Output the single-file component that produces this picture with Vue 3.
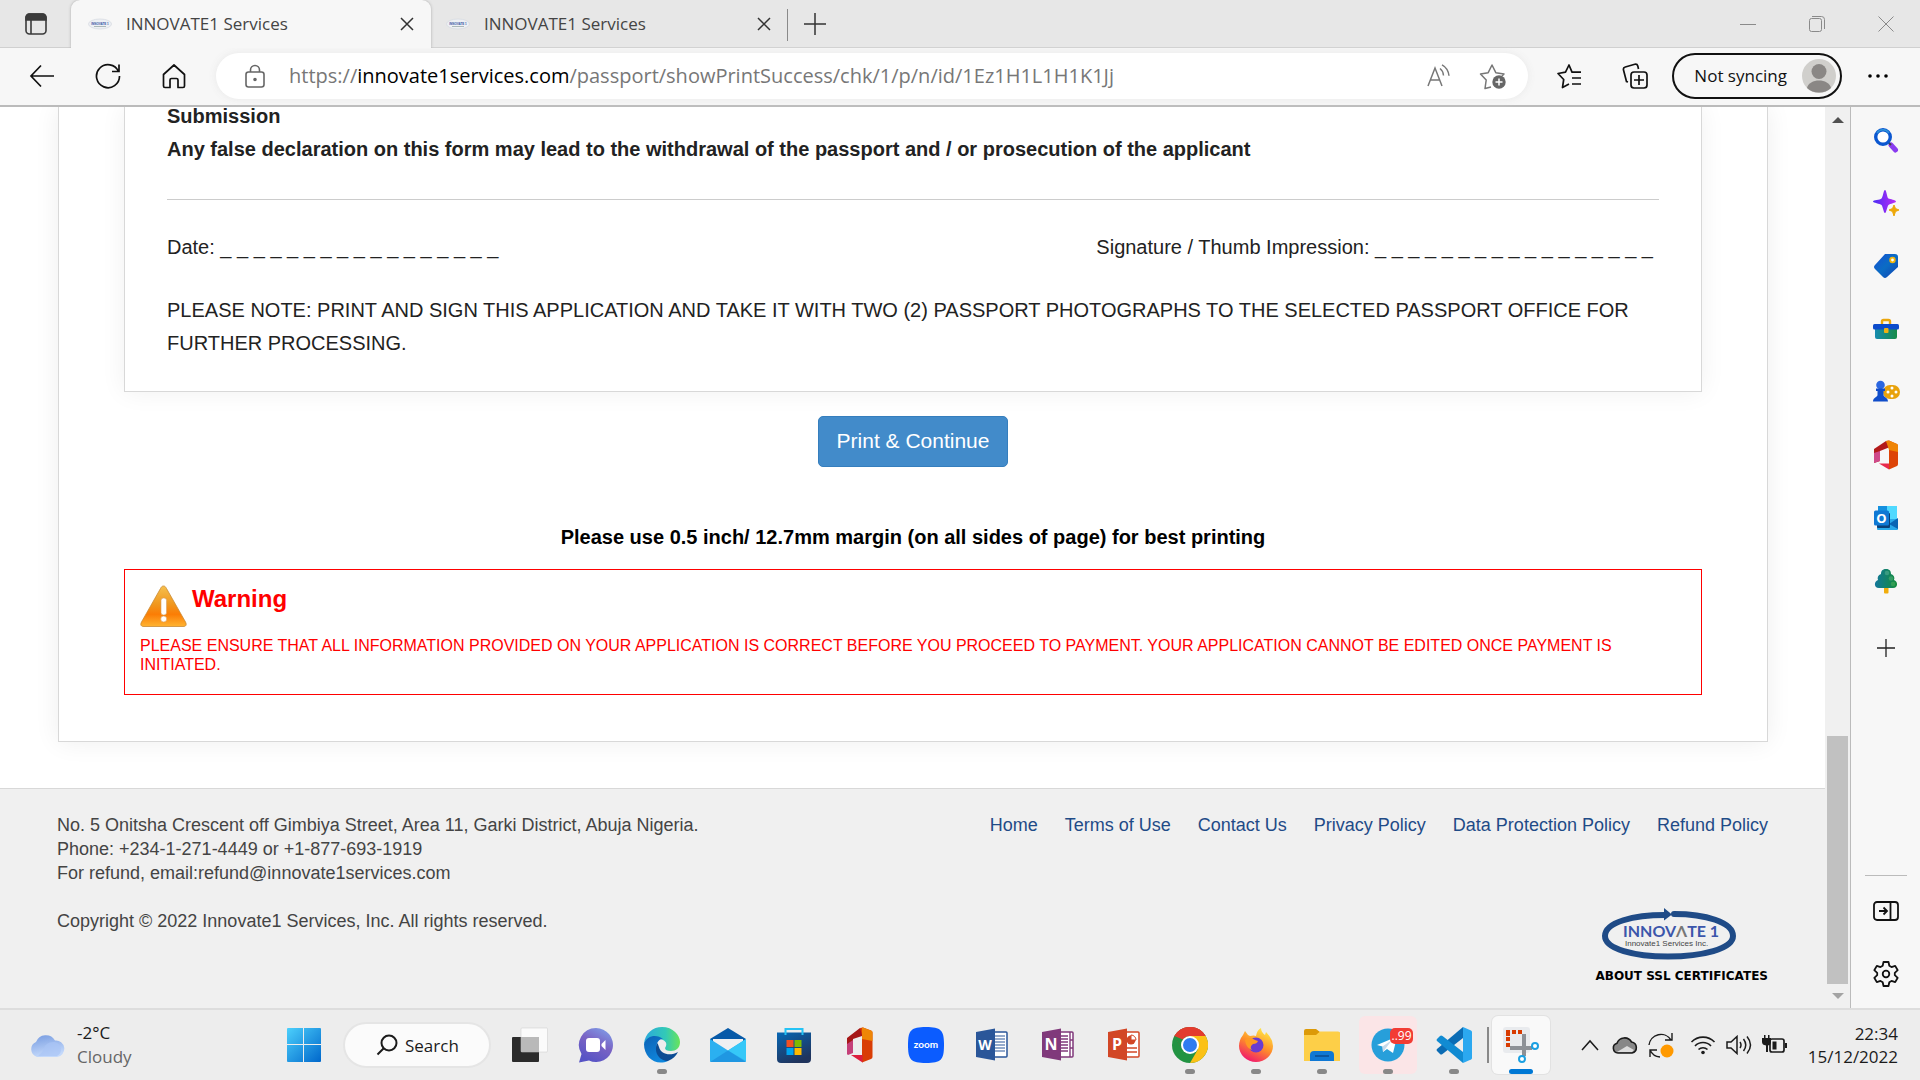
<script setup>
const tabs = [
  { title: 'INNOVATE1 Services', active: true },
  { title: 'INNOVATE1 Services', active: false },
]
const blank = '_ _ _ _ _ _ _ _ _ _ _ _ _ _ _ _ _'
const links = ['Home', 'Terms of Use', 'Contact Us', 'Privacy Policy', 'Data Protection Policy', 'Refund Policy']
</script>

<template>
  <div class="desktop">
    <header>
      <div class="tabstrip">
        <button class="plain tab-actions" aria-label="Tab actions">
          <svg width="22" height="22" viewBox="0 0 22 22" fill="none" stroke="#3b3b3b" stroke-width="1.6"><rect x="1" y="1" width="20" height="20" rx="3.5" /><path d="M1 4.5A3.5 3.5 0 0 1 4.500 1h13A3.500 3.500 0 0 1 21 4.500V7H1z" fill="#3b3b3b" /><path d="M6 7v14" /></svg>
        </button>
        <div v-for="(tab, i) in tabs" :key="i" class="tab" :class="{ active: tab.active }">
          <svg class="favicon" width="24" height="12" viewBox="0 0 24 12"><ellipse cx="12" cy="6" rx="11.500" ry="5" fill="#eef0f4" stroke="#d4d8e0" stroke-width=".7" /><text x="12" y="7" text-anchor="middle" font-family="Liberation Sans, sans-serif" font-weight="bold" font-size="3" fill="#3454a4">INNOVATE 1</text><path d="M6 8.500h12" stroke="#9aa" stroke-width=".8" /></svg>
          <span class="tab-title">{{ tab.title }}</span>
          <button class="plain" aria-label="Close tab"><svg width="14" height="14" viewBox="0 0 14 14" stroke="#333" stroke-width="1.500"><path d="M1 1l12 12M13 1L1 13" /></svg></button>
        </div>
        <button class="plain new-tab" aria-label="New tab"><svg width="22" height="22" viewBox="0 0 22 22" stroke="#333" stroke-width="1.500"><path d="M11 0v22M0 11h22" /></svg></button>
        <div class="window-controls">
          <button class="plain" aria-label="Minimize"><svg width="16" height="16" viewBox="0 0 16 16" stroke="#8a8a8a"><path d="M0 8.500h16" /></svg></button>
          <button class="plain" aria-label="Restore"><svg width="16" height="16" viewBox="0 0 16 16" fill="none" stroke="#8a8a8a"><rect x=".5" y="2.500" width="12" height="13" rx="2" /><path d="M3 .5h9.500a3 3 0 0 1 3 3V13" /></svg></button>
          <button class="plain" aria-label="Close window"><svg width="16" height="16" viewBox="0 0 16 16" stroke="#8a8a8a"><path d="M.5.5l15 15M15.500.5l-15 15" /></svg></button>
        </div>
      </div>

      <div class="toolbar">
        <div class="nav">
          <button class="plain" aria-label="Back"><svg width="26" height="26" viewBox="0 0 26 26" fill="none" stroke="#111" stroke-width="1.700"><path d="M25 13H2M12 2.500L2 13l10 10.500" /></svg></button>
          <button class="plain" aria-label="Refresh"><svg width="26" height="26" viewBox="0 0 26 26" fill="none" stroke="#111" stroke-width="1.700"><path d="M23.500 8.500A11.500 11.500 0 1 0 24.500 13M24 1.500v7h-7" /></svg></button>
          <button class="plain" aria-label="Home"><svg width="26" height="26" viewBox="0 0 26 26" fill="none" stroke="#111" stroke-width="1.700" stroke-linejoin="round"><path d="M2.500 11.500L13 2l10.500 9.500V23a1.500 1.500 0 0 1-1.500 1.500h-5V17a1.500 1.500 0 0 0-1.500-1.500h-5A1.500 1.500 0 0 0 9 17v7.500H4A1.500 1.500 0 0 1 2.500 23z" /></svg></button>
        </div>
        <div class="address">
          <svg width="20" height="24" viewBox="0 0 20 24" fill="none" stroke="#666" stroke-width="1.600"><rect x="1" y="8" width="18" height="15" rx="2.500" /><path d="M5.500 8V6a4.500 4.500 0 0 1 9 0v2" /><circle cx="10" cy="15.500" r="1" fill="#666" /></svg>
          <div class="url" contenteditable="true" role="textbox" aria-label="Address and search bar" spellcheck="false">https://<span class="domain">innovate1services.com</span>/passport/showPrintSuccess/chk/1/p/n/id/1Ez1H1L1H1K1Jj</div>
          <button class="plain" aria-label="Read aloud"><svg width="24" height="24" viewBox="0 0 24 24" fill="none" stroke="#777" stroke-width="1.500"><path d="M1 22L8 4l7 18M3.500 16h9M13 4.500c2 1.500 3.300 4 3.500 7M15 .8c4 2.200 6.500 6 7 11" /></svg></button>
          <button class="plain" aria-label="Add to favorites"><svg width="28" height="28" viewBox="0 0 28 28" fill="none" stroke="#777" stroke-width="1.500" stroke-linejoin="round"><path d="M12 25l-6 1.500 1.200-8.500L1.500 12l7.700-1.300L13 3l3.800 7.700L25 12l-2 2" /><circle cx="20" cy="20" r="6.700" fill="#666" stroke="none" /><path d="M20 16.500v7M16.500 20h7" stroke="#fff" /></svg></button>
        </div>
        <button class="plain fav" aria-label="Favorites"><svg width="26" height="26" viewBox="0 0 26 26" fill="none" stroke="#111" stroke-width="1.700" stroke-linejoin="round"><path d="M13 21l-6.500 3.500 1.200-8L2 10.500l7.500-1.300L13 2l3 7.200H25M16 15h9M16 21h9" /></svg></button>
        <button class="plain coll" aria-label="Collections"><svg width="26" height="26" viewBox="0 0 26 26" fill="none" stroke="#111" stroke-width="1.700"><rect x="9" y="9" width="16" height="16" rx="3" /><path d="M17 12v10M12 17h10M6 19l-1.500-.5L1.500 7a2.500 2.500 0 0 1 1.800-3l9.500-2.700a2.500 2.500 0 0 1 3 1.700l.7 3" /></svg></button>
        <button class="profile">Not syncing
          <svg width="34" height="34" viewBox="0 0 34 34"><circle cx="17" cy="17" r="17" fill="#d0cfcc" /><circle cx="17" cy="12.500" r="7.500" fill="#8a8785" /><path d="M5 29c2-10 22-10 24 0-6 6-18 6-24 0z" fill="#8a8785" /></svg>
        </button>
        <button class="plain more" aria-label="Settings and more"><svg width="20" height="4" viewBox="0 0 20 4"><circle cx="2" cy="2" r="1.800" /><circle cx="10" cy="2" r="1.800" /><circle cx="18" cy="2" r="1.800" /></svg></button>
      </div>
    </header>

    <div class="middle">
      <div class="viewport">
        <main>
          <section class="form">
            <p class="declaration">Submission<br />Any false declaration on this form may lead to the withdrawal of the passport and / or prosecution of the applicant</p>
            <hr />
            <div class="sign"><span>Date: {{ blank }}</span><span>Signature / Thumb Impression: {{ blank }}</span></div>
            <p class="note">PLEASE NOTE: PRINT AND SIGN THIS APPLICATION AND TAKE IT WITH TWO (2) PASSPORT PHOTOGRAPHS TO THE SELECTED PASSPORT OFFICE FOR FURTHER PROCESSING.</p>
          </section>
          <button class="print">Print &amp; Continue</button>
          <p class="margin-note">Please use 0.5 inch/ 12.7mm margin (on all sides of page) for best printing</p>
          <section class="warning">
            <div class="warning-head">
              <svg width="47" height="42" viewBox="0 0 47 42"><defs><linearGradient id="warn" x2="0" y2="1"><stop offset="0" stop-color="#f6c04d" /><stop offset=".45" stop-color="#f0971e" /><stop offset=".7" stop-color="#fb7d05" /><stop offset="1" stop-color="#ffb432" /></linearGradient></defs><path d="M23.500 1c1.500 0 2.200 1 3 2.500L45.500 37c1.500 3 .5 4.500-2.500 4.500H4C1 41.500 0 40 1.500 37L20.500 3.500C21.300 2 22 1 23.500 1z" fill="url(#warn)" stroke="#c98a35" stroke-width=".8" /><rect x="21" y="13" width="5.500" height="17" rx="2.500" fill="#fff" stroke="#d9a060" stroke-width=".6" /><circle cx="23.700" cy="34" r="3" fill="#fff" stroke="#d9a060" stroke-width=".6" /></svg>
              <h2>Warning</h2>
            </div>
            <p>PLEASE ENSURE THAT ALL INFORMATION PROVIDED ON YOUR APPLICATION IS CORRECT BEFORE YOU PROCEED TO PAYMENT. YOUR APPLICATION CANNOT BE EDITED ONCE PAYMENT IS INITIATED.</p>
          </section>
        </main>
        <footer>
          <address>
            No. 5 Onitsha Crescent off Gimbiya Street, Area 11, Garki District, Abuja Nigeria.<br />
            Phone: +234-1-271-4449 or +1-877-693-1919<br />
            For refund, email:refund@innovate1services.com<br /><br />
            Copyright © 2022 Innovate1 Services, Inc. All rights reserved.
          </address>
          <div class="footer-side">
            <nav><a v-for="link in links" :key="link" href="#">{{ link }}</a></nav>
            <div class="ssl">
              <svg width="136" height="52" viewBox="0 0 136 52"><path d="M64 7C33 7 4 14 4 28c0 13 29 20.500 63 20.500S132 41 132 28C132 14 104 6 73 6" fill="none" stroke="#1f4b87" stroke-width="6" stroke-linecap="round" /><path d="M63 0l8 6.500-8 6z" fill="#1f4b87" /><text x="22" y="29" font-family="Lato, sans-serif" font-weight="bold" font-size="16" fill="#3c56ab">INNOV<tspan fill="#777">Λ</tspan>TE 1</text><text x="24" y="38" font-family="Liberation Sans, sans-serif" font-size="8" fill="#444">Innovate1 Services Inc.</text></svg>
              <a href="#">ABOUT SSL CERTIFICATES</a>
            </div>
          </div>
        </footer>
      </div>
      <div class="scrollbar"><i class="up"></i><i class="thumb"></i><i class="down"></i></div>
      <aside>
        <button class="plain" aria-label="Search"><svg width="26" height="26" viewBox="0 0 26 26"><path d="M18 18l4.500 5" stroke="#8a3cf0" stroke-width="5" stroke-linecap="round" /><path d="M15 15l3 3" stroke="#444" stroke-width="2" /><circle cx="10" cy="10" r="7.300" fill="#fff" stroke="#0b57d0" stroke-width="3.400" /><path d="M4 6a7.300 7.300 0 0 1 12 0" stroke="#2f92d8" stroke-width="1.500" fill="none" /></svg></button>
        <button class="plain" aria-label="Discover"><svg width="26" height="26" viewBox="0 0 26 26"><defs><linearGradient id="spark"><stop offset="0" stop-color="#4b2cf5" /><stop offset="1" stop-color="#b92cf5" /></linearGradient></defs><path d="M12 0c1.500 0 2 8 3.500 8.500S23 10 23 11.500 17 13.500 15.500 15 13.500 23 12 23 10 16.500 8.500 15 0 13 0 11.500 7 10 8.500 8.500 10.500 0 12 0z" fill="url(#spark)" /><path d="M21 15l1.500 3.500L26 20l-3.500 1.500L21 26l-1.500-4.500L16 20l3.500-1.500z" fill="#eda80a" stroke="#eda80a" /></svg></button>
        <button class="plain" aria-label="Shopping"><svg width="26" height="26" viewBox="0 0 26 26"><defs><linearGradient id="tag" x2="1" y2="1"><stop offset="0" stop-color="#1550d5" /><stop offset=".5" stop-color="#0b6cc4" /><stop offset="1" stop-color="#1243b4" /></linearGradient></defs><path d="M12 1h10q3 0 3 3v10L14 24q-2 2-4 0L2 16q-2-2 0-4z" fill="url(#tag)" /><circle cx="19.500" cy="7" r="2.300" fill="#fff" stroke="#f2b50c" stroke-width="1.800" /></svg></button>
        <button class="plain" aria-label="Tools"><svg width="26" height="26" viewBox="0 0 26 26"><defs><linearGradient id="tool"><stop offset="0" stop-color="#168bb0" /><stop offset="1" stop-color="#168c46" /></linearGradient></defs><path d="M9 8V5.500Q9 4 10.500 4h5Q17 4 17 5.500V8" fill="none" stroke="#eba60c" stroke-width="2.400" /><path d="M2 10h22v11q0 2-2 2H4q-2 0-2-2z" fill="url(#tool)" /><rect y="8" width="26" height="5.500" rx="1.500" fill="#0c4bcb" /><rect x="11" y="12" width="4.500" height="5" rx="1" fill="#f0b112" /></svg></button>
        <button class="plain" aria-label="Games"><svg width="28" height="26" viewBox="0 0 28 26"><rect x="11" y="6" width="17" height="14" rx="7" fill="#e8a20c" /><g fill="#fff"><circle cx="20" cy="9" r="1.500" /><circle cx="20" cy="17" r="1.500" /><circle cx="16" cy="13" r="1.500" /><circle cx="24" cy="13" r="1.500" /></g><circle cx="8.500" cy="6" r="4.300" fill="#2b66e0" /><path d="M4 9.500h9v2.500h-1.500v4c0 2 4.500 2.500 4.500 6.500H1C1 18.500 5.500 18 5.500 16v-4H4z" fill="#104dca" /></svg></button>
        <button class="plain" aria-label="Microsoft 365"><svg width="26" height="30" viewBox="0 0 26 30"><path d="M1 9L13 1l4 3v3L7 11v10l-6 2z" fill="#b31a1a" /><path d="M1 13l6-2v10l-6 2z" fill="#cf4a8a" /><path d="M13 1l3-.5 8 3.500q1 .5 1 2v18q0 1.500-1 2l-8 3.500V7z" fill="#dd4408" /><path d="M13 1l3-.5 8 3.500q1 .5 1 2v6l-9-2z" fill="#ef8406" /><path d="M6 23.500h10v6z" fill="#e82a4b" /></svg></button>
        <button class="plain" aria-label="Outlook"><svg width="26" height="26" viewBox="0 0 26 26"><rect x="5" y="1" width="19" height="15" fill="#50d9ff" /><path d="M5 1h9v8H5z" fill="#1490df" /><path d="M4 14h21v10q0 1-1 1H5q-1 0-1-1z" fill="#28a8ea" /><path d="M25 13v11l-9-5z" fill="#0a64b4" /><rect x="4" y="8" width="13" height="15" rx="1" fill="#0a3f78" /><rect x="1" y="5.500" width="15" height="15" rx="1.500" fill="#0f78d4" /><text x="8.500" y="17.500" text-anchor="middle" font-family="Open Sans, sans-serif" font-size="13" font-weight="bold" fill="#fff">O</text></svg></button>
        <button class="plain" aria-label="E-tree"><svg width="26" height="26" viewBox="0 0 26 26"><rect x="11" y="18" width="4.500" height="7.500" rx="1" fill="#f1ad0c" /><defs><linearGradient id="tree"><stop offset="0" stop-color="#12779b" /><stop offset="1" stop-color="#158c3c" /></linearGradient></defs><path d="M13 1c4 0 5 2.500 5 5 3 1 4 3.500 3 6 4 1 4.500 8-1 8H6c-5.500 0-5-7-1-8-1-2.500 0-5 3-6 0-2.500 1-5 5-5z" fill="url(#tree)" /><circle cx="14" cy="5" r="2.300" fill="#4aa58c" opacity=".7" /><circle cx="18" cy="10.500" r="2.300" fill="#46a76d" opacity=".7" /><circle cx="20" cy="16" r="2.300" fill="#3fa657" opacity=".7" /></svg></button>
        <button class="plain customize" aria-label="Customize"><svg width="18" height="18" viewBox="0 0 18 18" stroke="#222" stroke-width="1.300"><path d="M9 0v18M0 9h18" /></svg></button>
        <div class="aside-bottom">
          <button class="plain" aria-label="Hide sidebar"><svg width="26" height="20" viewBox="0 0 26 20" fill="none" stroke="#111" stroke-width="1.800"><rect x="1" y="1" width="24" height="18" rx="3" /><path d="M17.500 1v18M6 10h8M10.500 6.500L14 10l-3.500 3.500" /></svg></button>
          <button class="plain" aria-label="Sidebar settings"><svg width="28" height="28" viewBox="0 0 28 28" fill="none" stroke="#111" stroke-width="1.800" stroke-linejoin="round"><path d="M11.500 2h5l.8 3.800 2.200 1.300 3.700-1.200 2.500 4.300-2.900 2.600v2.400l2.900 2.600-2.500 4.300-3.700-1.200-2.200 1.300-.8 3.800h-5l-.8-3.800-2.200-1.300-3.700 1.200-2.500-4.300 2.900-2.600v-2.400l-2.900-2.600 2.500-4.300 3.700 1.200 2.200-1.300z" /><circle cx="14" cy="14" r="3.300" /></svg></button>
        </div>
      </aside>
    </div>

    <div class="taskbar">
      <button class="plain weather">
        <svg width="36" height="26" viewBox="0 0 36 26"><defs><linearGradient id="cloud" x2=".3" y2="1"><stop offset="0" stop-color="#769be0" /><stop offset="1" stop-color="#c4d9fb" /></linearGradient></defs><path d="M8 25a8 8 0 0 1-1-15A10.500 10.500 0 0 1 26 8.500 8.300 8.300 0 0 1 28 25z" fill="url(#cloud)" /><path d="M14 19c1-6 5-9 11-9a7.500 7.500 0 0 1 3 14H9z" fill="#a9c5f5" opacity=".7" /></svg>
        <span class="forecast"><span>-2°C</span><span class="muted">Cloudy</span></span>
      </button>

      <div class="apps">
        <button class="task" aria-label="Start"><svg width="36" height="36" viewBox="0 0 36 36"><defs><linearGradient id="win" x2="1" y2="1"><stop offset="0" stop-color="#4cd0fc" /><stop offset="1" stop-color="#0067cb" /></linearGradient></defs><path d="M2 1h15v16H1V2q0-1 1-1zM18 1h16q1 0 1 1v15H18zM1 18h16v17H2q-1 0-1-1zM18 18h17v16q0 1-1 1H18z" fill="url(#win)" /></svg></button>
        <button class="search"><svg width="22" height="22" viewBox="0 0 22 22" fill="none" stroke="#1b1b1b" stroke-width="2"><circle cx="13" cy="9" r="7.500" /><path d="M7.500 14.500L1.500 20.500" /></svg>Search</button>
        <button class="task" aria-label="Task view"><svg width="36" height="36" viewBox="0 0 36 36"><rect x="0" y="10" width="27" height="25" rx="1" fill="#2b2b2b" /><rect x="9" y="1" width="26.500" height="24" rx="1" fill="#fff" opacity=".82" stroke="#ccc" stroke-width=".6" /><rect x="9" y="10" width="18" height="15" fill="#b9b9b9" /></svg></button>
        <button class="task" aria-label="Chat"><svg width="36" height="36" viewBox="0 0 36 36"><defs><linearGradient id="chat" x1=".9" x2=".4" y2="1"><stop offset="0" stop-color="#7fa1ea" /><stop offset=".5" stop-color="#7a63c4" /><stop offset="1" stop-color="#5754c5" /></linearGradient></defs><path d="M18 1a17 17 0 1 1-7 32.500L1 35.500 3.500 27A17 17 0 0 1 18 1z" fill="url(#chat)" /><rect x="8" y="11" width="14" height="14" rx="3" fill="#fff" /><path d="M23.500 17l4-4v10l-4-4z" fill="#fff" /></svg></button>
        <button class="task running" aria-label="Edge"><svg width="36" height="36" viewBox="0 0 36 36"><defs><linearGradient id="edge1"><stop offset="0" stop-color="#2ba9dd" /><stop offset=".6" stop-color="#32c9b7" /><stop offset="1" stop-color="#69e45a" /></linearGradient><linearGradient id="edge2" x2=".5" y2="1"><stop offset="0" stop-color="#0c61b5" /><stop offset="1" stop-color="#0f86dc" /></linearGradient></defs><path d="M0 17C1 6 9 0 18 0c11 0 18 8 18 15 0 6-4 9-9 9-4 0-6-1-6-3 2-3 2-6-2-8-7-4-14-3-19 4z" fill="url(#edge1)" /><path d="M0 17c3-9 13-10 19-5-5 0-7 5-6 9 1 6 6 11 11 13-12 5-24-3-24-17z" fill="url(#edge2)" /><path d="M13.500 16C9 24 15 34 24 34c5-2 8-5 10-9-7 4-17 3-19-5z" fill="#0b4b93" /></svg></button>
        <button class="task" aria-label="Mail"><svg width="36" height="36" viewBox="0 0 36 36"><path d="M0 12L18 1l18 11v8H0z" fill="#075aa8" /><path d="M3 12h30v8L18 27 3 18z" fill="#eef0f2" /><path d="M0 12l18 11.500L36 12v22q0 1-1 1H1q-1 0-1-1z" fill="#2bb0f0" /><path d="M18 23.500L36 12v22z" fill="#36c8f8" /><path d="M0 35l18-11.500L36 35z" fill="#1787d8" opacity=".6" /></svg></button>
        <button class="task" aria-label="Store"><svg width="36" height="36" viewBox="0 0 36 36"><defs><linearGradient id="store" x2=".5" y2="1"><stop offset="0" stop-color="#0767b4" /><stop offset="1" stop-color="#20345d" /></linearGradient></defs><path d="M1 5.500h34V32q0 4-4 4H5q-4 0-4-4z" fill="url(#store)" /><path d="M9.500 8V2h17v6" fill="none" stroke="#25c3f5" stroke-width="2" /><path d="M10.500 13h7v7h-7z" fill="#f25022" /><path d="M18.500 13h7v7h-7z" fill="#7fba00" /><path d="M10.500 21h7v7h-7z" fill="#00a4ef" /><path d="M18.500 21h7v7h-7z" fill="#ffb900" /></svg></button>
        <button class="task" aria-label="Office"><svg width="36" height="36" viewBox="0 0 36 36"><path d="M5 11L18 1l5 3v4l-12 4v13l-6 2z" fill="#a61717" /><path d="M5 17l6-4v13l-5 2q-1 0-1-2z" fill="#c54079" /><path d="M18 1l3-.5 8 3q1.500.5 1.500 2V30q0 1.500-1.500 2l-9 3.500V8z" fill="#d93d05" /><path d="M20 .6l1-.1 8 3q1.500.5 1.500 2V14L20 12z" fill="#ee8606" /><path d="M9 28h11.500v7.500z" fill="#dc1e3e" /></svg></button>
        <button class="task" aria-label="Zoom"><svg width="36" height="36" viewBox="0 0 36 36"><path d="M18 0c15 0 18 3 18 18s-3 18-18 18S0 33 0 18 3 0 18 0z" fill="#0b5cff" /><text x="18" y="21" text-anchor="middle" font-family="Lato, sans-serif" font-weight="bold" font-size="10" fill="#fff">zoom</text></svg></button>
        <button class="task" aria-label="Word"><svg width="36" height="36" viewBox="0 0 36 36"><rect x="18" y="5" width="15" height="25" rx="1" fill="#fff" stroke="#2a5699" stroke-width="1.500" /><path d="M20 9h11M20 12h11M20 15h11M20 18h11M20 21h11M20 24h11" stroke="#2a5699" stroke-width="1.200" /><path d="M2 5l19-3.500v32L2 30z" fill="#2a5699" /><text x="11" y="23" text-anchor="middle" font-family="Open Sans, sans-serif" font-weight="bold" font-size="14" fill="#fff">W</text></svg></button>
        <button class="task" aria-label="OneNote"><svg width="36" height="36" viewBox="0 0 36 36"><rect x="18" y="5" width="15" height="25" rx="1" fill="#fff" stroke="#80397b" stroke-width="1.500" /><path d="M20 9h8M20 12h8M20 15h8M20 18h8M20 21h8M20 24h8M30 5v25M30 13h3M30 21h3" stroke="#80397b" stroke-width="1.400" /><path d="M2 5l19-3.500v32L2 30z" fill="#80397b" /><text x="11" y="23" text-anchor="middle" font-family="Open Sans, sans-serif" font-weight="bold" font-size="16" fill="#fff">N</text></svg></button>
        <button class="task" aria-label="PowerPoint"><svg width="36" height="36" viewBox="0 0 36 36"><rect x="18" y="5" width="15" height="25" rx="1" fill="#fff" stroke="#d24726" stroke-width="1.500" /><circle cx="25" cy="13" r="4.500" fill="#d24726" /><path d="M25 13V8a5 5 0 0 1 5 5z" fill="#fff" stroke="#d24726" /><path d="M20 21h11M20 25h11" stroke="#d24726" stroke-width="1.500" /><path d="M2 5l19-3.500v32L2 30z" fill="#d24726" /><text x="11" y="23" text-anchor="middle" font-family="Open Sans, sans-serif" font-weight="bold" font-size="16" fill="#fff">P</text></svg></button>
        <button class="task running" aria-label="Chrome"><svg width="36" height="36" viewBox="0 0 36 36"><circle cx="18" cy="18" r="18" fill="#229342" /><path d="M2.400 9A18 18 0 0 1 33.600 9H18l-8 13z" fill="#e33b2e" /><path d="M2.400 9l7.800 13.500L18 27V9z" fill="#229342" /><path d="M2.400 9A18 18 0 0 1 33.600 9H18a9 9 0 0 0-8.700 7z" fill="#e33b2e" /><path d="M2.400 9l7.800 13.500 3-9z" fill="#229342" /><path d="M18 9h15.600A18 18 0 0 1 18 36l7.800-13.500z" fill="#fbc116" /><circle cx="18" cy="18" r="9" fill="#fff" /><circle cx="18" cy="18" r="7" fill="#2f7cf0" /></svg></button>
        <button class="task running" aria-label="Firefox"><svg width="36" height="36" viewBox="0 0 36 36"><defs><linearGradient id="fox" x1=".8" x2=".3" y2="1"><stop offset="0" stop-color="#fff04a" /><stop offset=".5" stop-color="#ff9128" /><stop offset="1" stop-color="#f0156f" /></linearGradient></defs><path d="M5 8l2-4 3 4 2 1q4-1 6 0 1-6 5-8 0 4 4 7l1-3q7 7 7 14a17 16 0 0 1-34 0Q1 13 5 8z" fill="url(#fox)" /><circle cx="18" cy="18" r="7.500" fill="#6a3cd0" /><path d="M7 13q5-4 10 0l3 1q-1 3-5 3-4 3-1 6-6-2-7-10z" fill="#ff9a22" /></svg></button>
        <button class="task running" aria-label="File Explorer"><svg width="36" height="36" viewBox="0 0 36 36"><path d="M0 4q0-2 2-2h10l4 3h18q2 0 2 2v8H0z" fill="#dc9a08" /><path d="M0 8h12l4-3.500h18q2 0 2 2V34H0z" fill="#fdcf48" /><path d="M6 34v-6q0-4 4-4h16q4 0 4 4v6z" fill="#0f78d4" /><path d="M11 29h14" stroke="#0a4b90" stroke-width="1.500" /></svg></button>
        <button class="task running alert" aria-label="Telegram"><svg width="36" height="36" viewBox="0 0 36 36"><circle cx="18" cy="18" r="16.500" fill="#279fda" /><path d="M7 18l19-8q1 0 .5 2L23 26l-6-4-4 3-.5-5.500z" fill="#fff" /><path d="M12.500 19.500L22 13l-6 8-3 4z" fill="#c8daea" /></svg><span class="badge">..99</span></button>
        <button class="task running" aria-label="Visual Studio Code"><svg width="36" height="36" viewBox="0 0 36 36"><path d="M1 24l3 3q1 1 2.500 0L27 11V0L1 22q-1 1 0 2z" fill="#0b6cb4" /><path d="M1 12l3-3q1-1 2.500 0L27 25v11L1 14q-1-1 0-2z" fill="#118bd2" /><path d="M27 0l8 3.500q1 .5 1 1.500v26q0 1-1 1.500L27 36z" fill="#2ba8f0" /></svg></button>
        <span class="divider"></span>
        <button class="task current" aria-label="Snipping Tool"><svg width="36" height="36" viewBox="0 0 36 36"><rect x="0" y="0" width="27" height="26" rx="3" fill="#e9ebee" /><path d="M3 5h4v4H3zM9 3h4v4H9zM15 3h4v4h-4zM3 3h4v4H3zM3 10h4v4H3zM3 16h4v4H3z" fill="#d83b01" /><path d="M21 7v22M7 21h22" stroke="#8d9197" stroke-width="4" /><circle cx="32" cy="19" r="3" fill="#fff" stroke="#1ba0e2" stroke-width="2" /><circle cx="19" cy="32" r="3" fill="#fff" stroke="#1ba0e2" stroke-width="2" /></svg></button>
      </div>

      <div class="tray">
        <svg class="chevron" width="18" height="12" viewBox="0 0 18 12" fill="none" stroke="#1b1b1b" stroke-width="1.500"><path d="M1 11l8-9 8 9" /></svg>
        <svg width="26" height="18" viewBox="0 0 26 18"><path d="M6 17A5 5 0 0 1 5 7.200 8 8 0 0 1 19.500 6 5.600 5.600 0 0 1 20 17z" fill="#888" stroke="#1b1b1b" stroke-width="1.600" /><path d="M5 16l10-6 7 4-2 2z" fill="#ddd" /></svg>
        <svg width="26" height="26" viewBox="0 0 26 26" fill="none" stroke="#1b1b1b" stroke-width="1.400"><path d="M1 13A12 12 0 0 1 23 8M24 1v7h-7M2 25v-7h7M2 18a12 12 0 0 0 10 7" /><circle cx="19" cy="19" r="6.500" fill="#ff9900" stroke="none" /></svg>
        <svg class="wifi" width="26" height="20" viewBox="0 0 26 20" fill="none" stroke="#1b1b1b" stroke-width="1.600"><path d="M1.500 7a16 16 0 0 1 23 0M5 11a11 11 0 0 1 16 0M8.500 14.500a6.500 6.500 0 0 1 9 0" /><circle cx="13" cy="17.500" r="1.800" fill="#1b1b1b" stroke="none" /></svg>
        <svg width="26" height="20" viewBox="0 0 26 20" fill="none" stroke="#1b1b1b" stroke-width="1.500"><path d="M1 7h4l6-5.500v17L5 13H1zM14 7q2 3 0 6M17.500 4q4.500 6 0 12M21 1.500q7 8.500 0 17" /></svg>
        <svg width="26" height="20" viewBox="0 0 26 20"><rect x="8" y="4" width="14" height="13" rx="2" fill="none" stroke="#1b1b1b" stroke-width="1.700" /><path d="M10.500 6.500h4v8h-4zM23 8h2v5h-2zM0 3h9v4q0 3-3 3.500V17H4v-6.500Q0 10 0 7zM2 0h1.500v3H2zM6 0h1.500v3H6z" fill="#1b1b1b" /></svg>
        <div class="clock"><time>22:34</time><time>15/12/2022</time></div>
      </div>
    </div>
  </div>
</template>

<style>
body { margin: 0; }
</style>

<style scoped>
* { box-sizing: border-box; }
svg { display: block; flex: none; }
p, h2 { margin: 0; }
button { font: inherit; color: inherit; cursor: pointer; }
.plain { display: flex; align-items: center; justify-content: center; padding: 0; border: 0; background: none; }
.desktop { display: flex; flex-direction: column; height: 100vh; overflow: hidden; font-family: "Open Sans", "Noto Sans", sans-serif; font-size: 17px; color: #1b1b1b; }

.tabstrip { display: flex; height: 48px; background: #e7e7e7; border-bottom: 1px solid #d0d0d0; }
.tab-actions { width: 71px; }
.tab { display: flex; align-items: center; gap: 14px; width: 357px; padding: 0 16px 0 15px; border-right: 1px solid #8a8a8a; border-image: linear-gradient(transparent 20%, #8a8a8a 20% 85%, transparent 85%) 1; color: #444; }
.tab.active { width: 360px; margin-bottom: -1px; padding: 0 17px 1px; background: #f7f7f7; border: 0; border-radius: 9px 9px 0 0; box-shadow: 0 0 3px #aaa; clip-path: inset(0 -4px 0 -4px); }
.tab-title { flex: 1; white-space: nowrap; }
.new-tab { width: 54px; }
.window-controls { display: flex; margin-left: auto; }
.window-controls button { width: 69px; }

.toolbar { display: flex; align-items: center; height: 59px; padding: 0 24px 2px 9px; background: #f7f7f7; border-bottom: 2px solid #bbb; }
.nav { display: flex; }
.nav button { width: 66px; height: 45px; }
.address { display: flex; align-items: center; flex: 1; height: 46px; margin: 0 17px 0 9px; padding: 0 21px 0 29px; border-radius: 23px; background: #fff; box-shadow: 0 0 8px #e8e8e8; }
.url { flex: 1; margin-left: 24px; font-size: 20px; color: #777; white-space: nowrap; outline: 0; }
.domain { color: #000; }
.address .plain { width: 28px; margin-left: 26px; }
.fav, .coll { width: 48px; height: 45px; }
.coll { margin: 0 13px 0 18px; }
.profile { display: flex; align-items: center; gap: 15px; height: 46px; padding: 0 4px 0 20px; border: 2px solid #111; border-radius: 23px; background: #f7f7f7; color: #111; white-space: nowrap; }
.more { width: 36px; height: 45px; margin-left: 18px; }

.middle { display: flex; flex: 1; min-height: 0; }
.viewport { display: flex; flex-direction: column; flex: 1; min-width: 0; overflow: hidden; background: #fff; font-family: "Liberation Sans", Arial, sans-serif; }
main { display: flex; flex-direction: column; align-items: center; margin: 0 57px 46px 58px; padding: 0 65px 46px; border: solid #d8d8d8; border-width: 0 1px 1px; box-shadow: 0 0 24px #eee; }
.form { align-self: stretch; padding: 0 42px 31px; border: solid #d8d8d8; border-width: 0 1px 1px; box-shadow: 0 0 24px #f0f0f0; font-size: 20px; line-height: 33px; color: #222; }
.declaration { margin-top: -7px; font-weight: bold; }
hr { margin: 33px 0 31px; border: 0; border-top: 1px solid #ccc; }
.sign { display: flex; justify-content: space-between; padding-right: 6px; }
.note { margin-top: 30px; }
.print { height: 51px; margin: 24px 0 58px; padding: 0 18px 1px; border: 1px solid #357ebd; border-radius: 5px; background: #428bca; color: #fff; font-size: 21px; }
.margin-note { font-size: 20px; line-height: 24px; font-weight: bold; color: #000; }
.warning { align-self: stretch; margin-top: 20px; padding: 15px 15px 20px; border: 1px solid #f00; color: #f00; font-size: 16px; line-height: 19px; }
.warning-head { display: flex; gap: 5px; margin-bottom: 9px; }
h2 { font-size: 24px; line-height: 28px; }

footer { display: flex; flex: 1; justify-content: space-between; padding: 24px 57px; border-top: 1px solid #d8d8d8; background: #f0f0f0; font-size: 18px; line-height: 24px; color: #444; }
address { font-style: normal; }
nav { display: flex; gap: 27px; }
a { color: #1f4b87; text-decoration: none; }
.footer-side, .ssl { display: flex; flex-direction: column; }
.ssl { align-self: flex-end; margin-top: 71px; gap: 4px; }
.ssl svg { margin-left: 6px; }
.ssl a { font: bold 12px/24px "DejaVu Sans", Verdana, sans-serif; color: #000; }

.scrollbar { display: flex; flex-direction: column; align-items: center; width: 26px; padding: 10px 0 9px; background: #f0f0f0; border-right: 1px solid #bbb; }
.up, .down { border: 6px solid transparent; border-top: 0; border-bottom-color: #505050; }
.down { border-top: 6px solid #a3a3a3; border-bottom: 0; }
.thumb { width: 21px; height: 248px; margin: auto 0 9px; background: #c1c1c1; }

aside { display: flex; flex-direction: column; align-items: center; width: 69px; padding-top: 1px; background: #f7f7f7; }
aside .plain { width: 42px; height: 63px; }
aside .customize { margin-top: 4px; }
.aside-bottom { margin-top: auto; padding: 3px 0; border-top: 1px solid #bbb; }

.taskbar { display: flex; align-items: center; height: 72px; padding: 0 22px 0 29px; background: #ededed; border-top: 2px solid #ddd; }
.weather { gap: 12px; width: 242px; justify-content: flex-start; }
.forecast { display: flex; flex-direction: column; text-align: left; line-height: 24px; }
.muted { color: #666; }
.apps { display: flex; align-items: center; }
.task { position: relative; display: flex; align-items: center; justify-content: center; width: 58px; height: 58px; margin: 0 4px; padding: 0; border: 0; border-radius: 6px; background: none; }
.search { display: flex; align-items: center; gap: 7px; width: 148px; height: 46px; margin: 0 6px; padding: 0 0 0 31px; border: 2px solid #e5e5e5; border-radius: 23px; background: #fbfbfb; }
.running::after, .current::after { content: ""; position: absolute; bottom: 0; left: 50%; width: 10px; height: 5px; margin-left: -5px; border-radius: 3px; background: #888; }
.current { margin-left: 3px; background: #f9f9f9; box-shadow: 0 0 0 1px #e2e2e2; }
.current::after { width: 24px; margin-left: -12px; background: #0078d4; }
.alert { background: #fbe5e7; }
.badge { position: absolute; top: 12px; right: 4px; width: 23px; border-radius: 5px; background: #f23c34; color: #fff; font-size: 12px; line-height: 16px; text-align: center; }
.divider { width: 2px; height: 36px; background: #888; }
.tray { display: flex; align-items: center; gap: 10px; margin-left: auto; }
.chevron { margin-right: 3px; }
.wifi { margin-left: 6px; }
.clock { display: flex; flex-direction: column; margin-left: 10px; text-align: right; line-height: 23px; }
</style>
